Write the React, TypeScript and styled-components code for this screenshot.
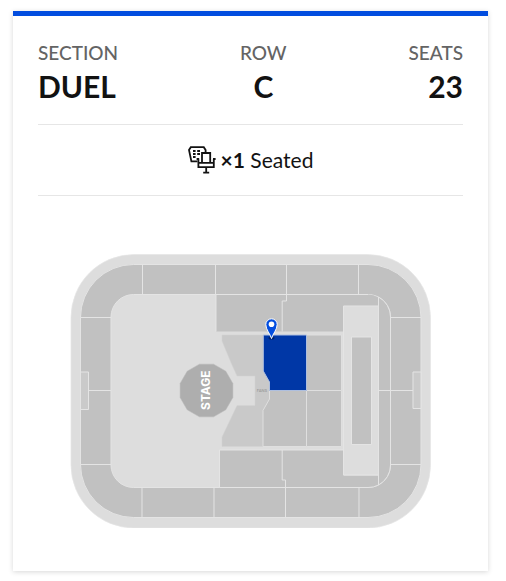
import React from "react";
import styled, { createGlobalStyle } from "styled-components";

const GlobalStyle = createGlobalStyle`
  * { box-sizing: border-box; }
  body { margin: 0; background: #fff; color: #121212; font-family: Lato, "Open Sans", sans-serif; }
`;

const Page = styled.main`
  padding: 11px 18px 10px 13px;
`;

const Card = styled.article`
  padding: 0 25px 43px;
  border-top: 5px solid #024ddf;
  background: #fff;
  box-shadow: 0 1px 5px rgba(0, 0, 0, 0.16);
`;

const Details = styled.dl`
  display: flex;
  justify-content: space-between;
  margin: 0;
  padding: 25px 0 17px;
  border-bottom: 1px solid #e6e6e6;
`;

const Detail = styled.div<{ $align: "left" | "center" | "right" }>`
  text-align: ${(p) => p.$align};
`;

const Label = styled.dt`
  font-size: 19px;
  line-height: 24px;
  font-weight: 500;
  color: #646464;
`;

const Value = styled.dd`
  margin: 0;
  font-size: 30px;
  line-height: 42px;
  font-weight: 700;
`;

const Seating = styled.p`
  display: flex;
  align-items: center;
  justify-content: center;
  gap: 5px;
  height: 71px;
  margin: 0;
  border-bottom: 1px solid #e6e6e6;
  font-size: 21px;
  line-height: 28px;
`;

const SeatIcon = styled.svg`
  width: 28px;
  height: 28px;
  flex: none;
`;

const SeatMap = styled.svg`
  display: block;
  width: calc(100% - 64px);
  height: auto;
  margin: 58px 32px 0;
`;

const details = [
  { label: "SECTION", value: "DUEL", align: "left" },
  { label: "ROW", value: "C", align: "center" },
  { label: "SEATS", value: "23", align: "right" },
] as const;

const stagePoints = Array.from({ length: 12 }, (_, i) => {
  const a = ((i * 30 + 15) * Math.PI) / 180;
  return `${206.5 + 27.3 * Math.cos(a)},${390.5 + 27.3 * Math.sin(a)}`;
}).join(" ");

function SeatedIcon() {
  return (
    <SeatIcon viewBox="0 0 28 28" fill="none" stroke="#121212" strokeWidth="1.8" aria-hidden="true">
      <path d="M9.5 15.4H3.4L1 4L2.8 1.2H15.8L17.6 4V6.5" />
      <path d="M5 5h2.6M9.2 5H12M5 8h2.6M9.2 8H12M5 11h2.6" strokeWidth="2" />
      <path d="M14 16.2V7h8.2v9.2M8.6 13h2.6M10.4 13V21.2H25.8V13M25 13h2.6M10.4 16.8h15.4M18.2 21.2v5M15.2 26.6h6" />
    </SeatIcon>
  );
}

function VenueMap() {
  return (
    <SeatMap viewBox="70 254 361 274" role="img" aria-label="Venue map with section DUEL highlighted">
      <rect x="71" y="254.5" width="359.5" height="273.5" rx="63" fill="#ddd" stroke="#e5e5e5" strokeWidth="0.7" />
      <g stroke="#e4e4e4" strokeWidth="1">
        <rect x="80.5" y="264.5" width="340.5" height="253" rx="53" fill="#c1c1c1" />
        <path
          d="M142.5 264.5v30M215.5 264.5v30M286.5 264.5v30M358.5 264.5v30M142 487.5v30M214 487.5v30M285.5 487.5v30M359 487.5v30M80.5 317.5h30.5M80.5 390.5h30.5M80.5 464.5h30.5M390.5 317.5h30.5M390.5 390.5h30.5M390.5 464.5h30.5"
          fill="none"
        />
        <path d="M80.5 372h8v37.5h-8zM421 372h-8v36.5h8z" fill="#cacaca" />
        <rect x="111" y="294.5" width="279.5" height="193" rx="22.5" fill="#ddd" />
        <path d="M216 294.5H368A22.5 22.5 0 0 1 378.5 297.5V306H343.5V331.5H216Z" fill="#c1c1c1" stroke="none" />
        <path d="M219.5 450H343.5V475H378.5V485A22.5 22.5 0 0 1 368 487.5H219.5Z" fill="#c1c1c1" />
        <path d="M378.5 297A22.5 22.5 0 0 1 390.5 317V465A22.5 22.5 0 0 1 378.5 485Z" fill="#c1c1c1" />
        <path d="M378.5 390.5h12M216 294.5v37M216 294.5H368M286.5 294.5V301H282.2V331.5M282.2 450V480H285.5V487.5" fill="none" />
        <path d="M343.5 306h35v169h-35z" fill="#ddd" />
        <path d="M351.5 337h20v107.5h-20z" fill="#c1c1c1" />
      </g>
      <path
        d="M222 335H263.5V371L269.5 382V399L263.2 410.5V446.5H222V437L237 405.5H255V376H237L232 365L222 341Z"
        fill="#c9c9c9"
        stroke="#d2d2d2"
        strokeWidth="0.5"
      />
      <g stroke="#dfdfdf" strokeWidth="1" fill="#c1c1c1">
        <path d="M306.5 335h35v55.5h-35z" />
        <path d="M306.5 390.5h35v56h-35z" />
        <path d="M269.5 390.5H306.5V446.5H263V410.5L269.5 399Z" />
        <path d="M263.3 335H306.5V390.5H269.5V382L263.3 371Z" fill="#0037a6" stroke="#aebfdf" />
      </g>
      <polygon points={stagePoints} fill="#aeaeae" stroke="#b8b8b8" strokeWidth="0.5" />
      <text x="206" y="390.2" transform="rotate(-90 206 390.2)" dy="4" textAnchor="middle" fontFamily="Inter, sans-serif" fontSize="12" fontWeight="700" fill="#fff">
        STAGE
      </text>
      <text x="262" y="391.7" textAnchor="middle" fontFamily="Inter, sans-serif" fontSize="4" fontWeight="500" fill="#999">
        FANS
      </text>
      <ellipse cx="271.5" cy="338" rx="3" ry="1.5" fill="#00226b" />
      <path
        d="M271.5 338.5C270.3 334.2 265.8 329.5 265.8 324.5A5.7 5.7 0 0 1 277.2 324.5C277.2 329.5 272.7 334.2 271.5 338.5Z"
        fill="#024ddf"
        stroke="#fff"
        strokeWidth="1"
      />
      <circle cx="271.5" cy="324.2" r="2.8" fill="#fff" />
    </SeatMap>
  );
}

export default function App() {
  return (
    <>
      <GlobalStyle />
      <Page>
        <Card>
          <Details>
            {details.map((d) => (
              <Detail key={d.label} $align={d.align}>
                <Label>{d.label}</Label>
                <Value>{d.value}</Value>
              </Detail>
            ))}
          </Details>
          <Seating>
            <SeatedIcon />
            <span>
              <strong>×1</strong> Seated
            </span>
          </Seating>
          <VenueMap />
        </Card>
      </Page>
    </>
  );
}
